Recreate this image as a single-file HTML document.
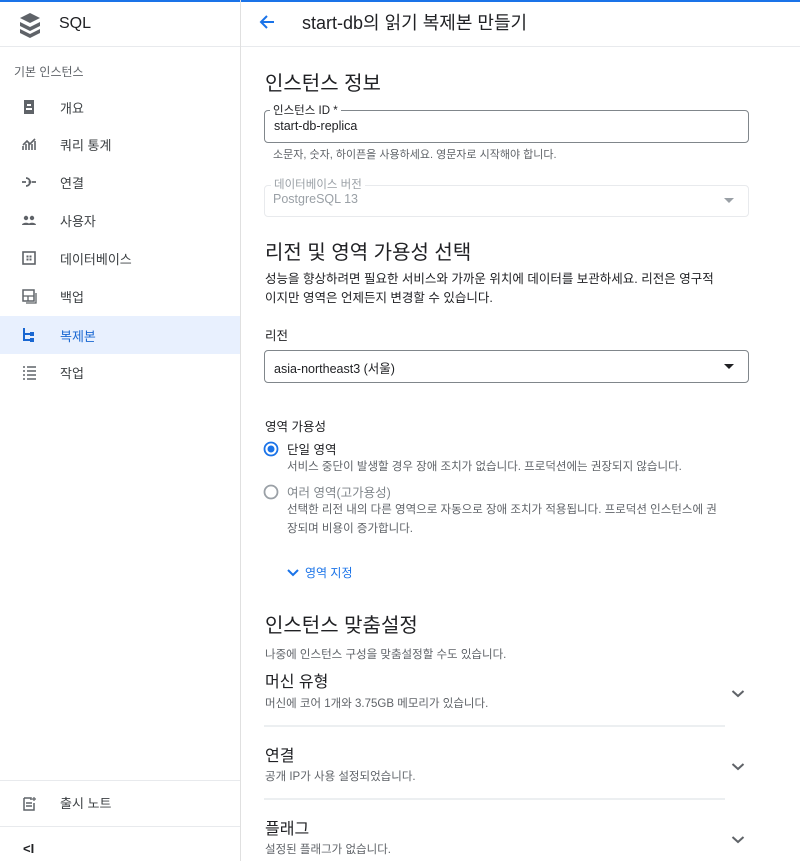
<!DOCTYPE html>
<html><head><meta charset="utf-8"><style>
*{margin:0;padding:0;box-sizing:border-box}
body{width:800px;height:861px;overflow:hidden;background:#fff;font-family:"Liberation Sans","Noto Sans CJK KR",sans-serif;color:#202124;position:relative}
.a{position:absolute;white-space:nowrap}
.side{position:absolute;left:0;top:0;width:241px;height:861px;border-right:1px solid #e0e0e0}
.nav{position:absolute;left:0;width:240px;height:37px;font-size:13px;color:#3c4043}
.nav span{position:absolute;left:60px;top:9px}
.nav svg{position:absolute;left:21px;top:10px}
.h1{font-size:20px;color:#202124}
.sm{font-size:11.5px;color:#5f6368}
.fld{position:absolute;left:264px;width:485px;border:1px solid #80868b;border-radius:4px}
.lbl{position:absolute;background:#fff;padding:0 3px;font-size:11.5px}
.chev{position:absolute;left:731px}
.div{position:absolute;left:264px;width:461px;height:2px;background:#eceff1}
</style></head><body>
<div class="a" style="left:0;top:0;width:800px;height:2px;background:#1a73e8"></div>
<div class="side">
 <div class="a" style="left:0;top:46px;width:240px;height:1px;background:#e8eaed"></div>
 <svg class="a" style="left:18px;top:12px" width="24" height="26" viewBox="0 0 24 26"><path d="M12 1L22 6 12 11 2 6Z" fill="#5f6368"/><path d="M2 10l10 5 10-5v4l-10 5-10-5Z" fill="#5f6368"/><path d="M2 17l10 5 10-5v4l-10 5-10-5Z" fill="#5f6368"/></svg>
 <div class="a" style="left:59px;top:15px;font-size:16px;color:#202124">SQL</div>
 <div class="a" style="left:14px;top:63px;font-size:12px;color:#5f6368">기본 인스턴스</div>
 <div class="nav" style="top:89px"><svg width="16" height="16"><rect x="3" y="1" width="10" height="14" fill="#5f6368"/><rect x="6" y="5" width="4" height="2" fill="#fff"/><rect x="5" y="9" width="6" height="2" fill="#fff"/></svg><span>개요</span></div>
 <div class="nav" style="top:126px"><svg width="16" height="16"><path d="M2 14V10M5 14V8M8 14V7M11 14V8M14 14V5M2 9l4-4 3 3 5-5" stroke="#5f6368" stroke-width="1.6" fill="none"/></svg><span>쿼리 통계</span></div>
 <div class="nav" style="top:164px"><svg width="16" height="16"><path d="M1 8h4M11 8h4M5 4a4 4 0 1 1 0 8" stroke="#5f6368" stroke-width="1.8" fill="none"/><circle cx="9" cy="8" r="1.5" fill="#5f6368"/></svg><span>연결</span></div>
 <div class="nav" style="top:202px"><svg width="16" height="16"><circle cx="5" cy="6" r="2.2" fill="#5f6368"/><circle cx="11" cy="6" r="2.2" fill="#5f6368"/><path d="M1 13c0-3 8-3 8 0ZM7 13c0-3 8-3 8 0Z" fill="#5f6368"/></svg><span>사용자</span></div>
 <div class="nav" style="top:240px"><svg width="16" height="16"><rect x="2" y="2" width="12" height="12" stroke="#5f6368" stroke-width="1.6" fill="none"/><rect x="5.5" y="5.5" width="2" height="2" fill="#5f6368"/><rect x="8.5" y="5.5" width="2" height="2" fill="#5f6368"/><rect x="5.5" y="8.5" width="2" height="2" fill="#5f6368"/><rect x="8.5" y="8.5" width="2" height="2" fill="#5f6368"/></svg><span>데이터베이스</span></div>
 <div class="nav" style="top:278px"><svg width="16" height="16"><rect x="2" y="2" width="11" height="11" stroke="#5f6368" stroke-width="1.5" fill="none"/><path d="M2 8h11M7 8v5M15 5v10H5" stroke="#5f6368" stroke-width="1.3" fill="none"/></svg><span>백업</span></div>
 <div class="nav" style="top:316px;height:38px;background:#e8f0fe;color:#1967d2"><svg width="16" height="16"><path d="M3 2v12h6M3 8h6" stroke="#1967d2" stroke-width="2" fill="none"/><rect x="9" y="6" width="4" height="4" fill="#1967d2"/><rect x="9" y="12" width="4" height="4" fill="#1967d2"/></svg><span style="top:10px">복제본</span></div>
 <div class="nav" style="top:354px"><svg width="16" height="16"><path d="M2 3h2M6 3h9M2 7h2M6 7h9M2 11h2M6 11h9M2 15h2M6 15h9" stroke="#5f6368" stroke-width="1.6"/></svg><span>작업</span></div>
 <div class="a" style="left:0;top:780px;width:240px;height:1px;background:#e8eaed"></div>
 <div class="nav" style="top:785px"><svg width="16" height="16"><path d="M3 3h7v2M3 3v12h10V8" stroke="#5f6368" stroke-width="1.5" fill="none"/><path d="M5 8h6M5 11h6" stroke="#5f6368" stroke-width="1.5"/><path d="M13 2v4M11 4h4" stroke="#5f6368" stroke-width="1.2"/></svg><span style="top:8px">출시 노트</span></div>
 <div class="a" style="left:0;top:826px;width:240px;height:1px;background:#e8eaed"></div>
 <div class="a" style="left:23px;top:841px;font-size:13px;font-weight:bold;color:#202124">&lt;I</div>
</div>
<div class="a" style="left:241px;top:46px;width:559px;height:1px;background:#e8eaed"></div>
<svg class="a" style="left:258px;top:13px" width="18" height="18"><path d="M16 9H3M9 3L3 9l6 6" stroke="#1a73e8" stroke-width="2" fill="none"/></svg>
<div class="a" style="left:302px;top:9px;font-size:18px;color:#202124">start-db의 읽기 복제본 만들기</div>

<div class="a h1" style="left:265px;top:67px">인스턴스 정보</div>
<div class="fld" style="top:110px;height:33px"></div>
<div class="a lbl" style="left:270px;top:102px;color:#202124">인스턴스 ID *</div>
<div class="a" style="left:274px;top:119px;font-size:12.5px">start-db-replica</div>
<div class="a sm" style="left:273px;top:146px;font-size:11px">소문자, 숫자, 하이픈을 사용하세요. 영문자로 시작해야 합니다.</div>
<div class="fld" style="top:185px;height:32px;border-color:#e8eaed"></div>
<div class="a lbl" style="left:271px;top:176px;color:#9aa0a6">데이터베이스 버전</div>
<div class="a" style="left:273px;top:192px;font-size:12.5px;color:#9aa0a6">PostgreSQL 13</div>
<svg class="a" style="left:723px;top:197px" width="12" height="8"><path d="M1 1h10L6 6z" fill="#9aa0a6"/></svg>

<div class="a h1" style="left:265px;top:236px">리전 및 영역 가용성 선택</div>
<div class="a" style="left:265px;top:270px;font-size:12.5px;line-height:19px;white-space:normal;width:490px">성능을 향상하려면 필요한 서비스와 가까운 위치에 데이터를 보관하세요. 리전은 영구적<br>이지만 영역은 언제든지 변경할 수 있습니다.</div>
<div class="a" style="left:265px;top:325px;font-size:12.5px">리전</div>
<div class="fld" style="top:350px;height:33px"></div>
<div class="a" style="left:274px;top:358px;font-size:12.5px">asia-northeast3 (서울)</div>
<svg class="a" style="left:723px;top:363px" width="12" height="8"><path d="M1 1h10L6 6z" fill="#202124"/></svg>

<div class="a" style="left:265px;top:416px;font-size:12.5px">영역 가용성</div>
<svg class="a" style="left:263px;top:441px" width="16" height="16"><circle cx="8" cy="8" r="6.5" stroke="#1a73e8" stroke-width="1.8" fill="none"/><circle cx="8" cy="8" r="3.5" fill="#1a73e8"/></svg>
<div class="a" style="left:287px;top:439px;font-size:12.5px">단일 영역</div>
<div class="a sm" style="left:287px;top:458px;font-size:11.5px">서비스 중단이 발생할 경우 장애 조치가 없습니다. 프로덕션에는 권장되지 않습니다.</div>
<svg class="a" style="left:263px;top:484px" width="16" height="16"><circle cx="8" cy="8" r="6.5" stroke="#9aa0a6" stroke-width="1.8" fill="none"/></svg>
<div class="a" style="left:287px;top:482px;font-size:12.5px;color:#80868b">여러 영역(고가용성)</div>
<div class="a sm" style="left:287px;top:501px;font-size:11.5px;line-height:19px;white-space:normal;width:465px">선택한 리전 내의 다른 영역으로 자동으로 장애 조치가 적용됩니다. 프로덕션 인스턴스에 권<br>장되며 비용이 증가합니다.</div>
<svg class="a" style="left:287px;top:568px" width="12" height="10"><path d="M1 2l5 5 5-5" stroke="#1a73e8" stroke-width="2" fill="none"/></svg>
<div class="a" style="left:305px;top:564px;font-size:12px;color:#1a73e8">영역 지정</div>

<div class="a h1" style="left:265px;top:609px">인스턴스 맞춤설정</div>
<div class="a sm" style="left:265px;top:646px;font-size:11.5px">나중에 인스턴스 구성을 맞춤설정할 수도 있습니다.</div>
<div class="a" style="left:265px;top:668px;font-size:16px">머신 유형</div>
<div class="a sm" style="left:265px;top:695px;font-size:11.5px">머신에 코어 1개와 3.75GB 메모리가 있습니다.</div>
<svg class="chev" style="top:689px" width="14" height="10"><path d="M1.5 2l5.5 5 5.5-5" stroke="#5f6368" stroke-width="2" fill="none"/></svg>
<div class="div" style="top:725px"></div>
<div class="a" style="left:265px;top:742px;font-size:16px">연결</div>
<div class="a sm" style="left:265px;top:768px;font-size:11.5px">공개 IP가 사용 설정되었습니다.</div>
<svg class="chev" style="top:762px" width="14" height="10"><path d="M1.5 2l5.5 5 5.5-5" stroke="#5f6368" stroke-width="2" fill="none"/></svg>
<div class="div" style="top:798px"></div>
<div class="a" style="left:265px;top:815px;font-size:16px">플래그</div>
<div class="a sm" style="left:265px;top:841px;font-size:11.5px">설정된 플래그가 없습니다.</div>
<svg class="chev" style="top:835px" width="14" height="10"><path d="M1.5 2l5.5 5 5.5-5" stroke="#5f6368" stroke-width="2" fill="none"/></svg>
</body></html>
